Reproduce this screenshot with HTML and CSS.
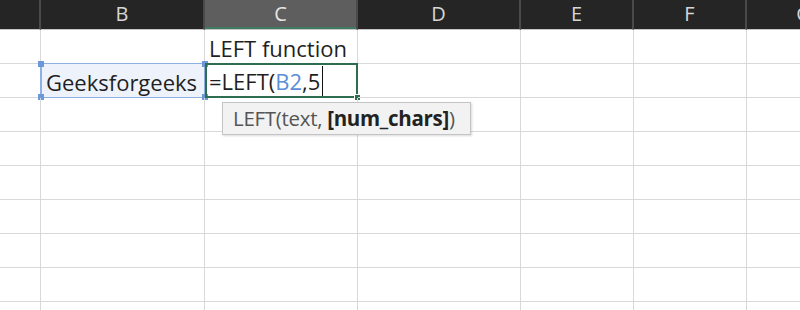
FILE: index.html
```html
<!DOCTYPE html>
<html>
<head>
<meta charset="utf-8">
<link rel="stylesheet" href="styles.css">
</head>
<body>
<div class="sheet">
  <div class="grid">
    <div class="hc"></div>
    <div class="hc">B</div>
    <div class="hc hc-active">C</div>
    <div class="hc">D</div>
    <div class="hc">E</div>
    <div class="hc">F</div>
    <div class="hc hc-last">G</div>

    <div class="c"></div>
    <div class="c"></div>
    <div class="c c-text">LEFT function</div>
    <div class="c"></div><div class="c"></div><div class="c"></div><div class="c"></div>

    <div class="c"></div>
    <div class="c c-text c-ref">Geeksforgeeks
      <span class="h h-tl"></span><span class="h h-tr"></span><span class="h h-bl"></span><span class="h h-br"></span>
    </div>
    <div class="c c-text c-edit">=LEFT(<span class="ref">B2</span>,5<span class="caret"></span>
      <span class="fill"></span>
      <div class="tip">LEFT(text, <b>[num_chars]</b>)</div>
    </div>
    <div class="c"></div><div class="c"></div><div class="c"></div><div class="c"></div>

    <div class="c"></div><div class="c"></div><div class="c"></div><div class="c"></div><div class="c"></div><div class="c"></div><div class="c"></div>
    <div class="c"></div><div class="c"></div><div class="c"></div><div class="c"></div><div class="c"></div><div class="c"></div><div class="c"></div>
    <div class="c"></div><div class="c"></div><div class="c"></div><div class="c"></div><div class="c"></div><div class="c"></div><div class="c"></div>
    <div class="c"></div><div class="c"></div><div class="c"></div><div class="c"></div><div class="c"></div><div class="c"></div><div class="c"></div>
    <div class="c"></div><div class="c"></div><div class="c"></div><div class="c"></div><div class="c"></div><div class="c"></div><div class="c"></div>
    <div class="c"></div><div class="c"></div><div class="c"></div><div class="c"></div><div class="c"></div><div class="c"></div><div class="c"></div>
    <div class="c"></div><div class="c"></div><div class="c"></div><div class="c"></div><div class="c"></div><div class="c"></div><div class="c"></div>
  </div>
</div>
</body>
</html>
```
FILE: styles.css
```css
* { box-sizing: border-box; }
html, body { margin: 0; padding: 0; background: #fff; }
body { width: 800px; height: 310px; overflow: hidden; font-family: "Open Sans", "Noto Sans", sans-serif; }
.sheet { width: 800px; height: 310px; overflow: hidden; }
.grid {
  display: grid;
  width: 860px;
  grid-template-columns: 41px 164px 153px 163px 113px 113px 113px;
  grid-template-rows: 30px;
  grid-auto-rows: 34px;
}
.hc {
  background: #252525;
  color: #d6d6d6;
  font-size: 20px;
  line-height: 28px;
  text-align: center;
  border-right: 2px solid #4a4a4a;
  border-bottom: 1px solid #c6c6c6;
}
.hc-active {
  background: #5e5e5e;
  color: #e6e6e6;
  box-shadow: inset 0 -2px 0 #3f7a62;
}
.hc-last { border-right: none; }
.c {
  position: relative;
  border-right: 1px solid #d9d9d9;
  border-bottom: 1px solid #d9d9d9;
}
.c-text {
  font-size: 22px;
  line-height: 30px;
  color: #1f1f1f;
  display: flex;
  align-items: flex-end;
  padding: 0 0 0 4px;
  white-space: nowrap;
}
.c-ref {
  background: #eef3fb;
  border: 1px solid #8eb0e2;
  border-left: 2px solid #8eb0e2;
  margin-top: -1px;
  margin-left: -1px;
  padding-left: 4px;
}
.h {
  position: absolute;
  width: 6px;
  height: 6px;
  background: #6d98d8;
}
.h-tl { left: -4px; top: -3px; }
.h-tr { right: -4px; top: -3px; }
.h-bl { left: -4px; bottom: -3px; }
.h-br { right: -4px; bottom: -3px; }
.c-edit {
  border: 2px solid #2f6d50;
  margin: -1px 0 0 0;
  padding-left: 2px;
}
.ref { color: #5b8fd6; }
.caret {
  display: inline-block;
  width: 1px;
  height: 30px;
  background: #111;
  margin-left: 2px;
  align-self: flex-end;
}
.fill {
  position: absolute;
  right: -5px;
  bottom: -5px;
  width: 7px;
  height: 7px;
  background: #2f6d50;
  border: 1px solid #fff;
}
.tip {
  position: absolute;
  left: 15px;
  top: 37px;
  width: 249px;
  height: 33px;
  background: #f2f2f2;
  border: 1px solid #c4c4c4;
  box-shadow: 1px 1px 2px rgba(0,0,0,0.15);
  font-size: 20.5px;
  letter-spacing: -0.3px;
  line-height: 30px;
  color: #555;
  padding-left: 10px;
  z-index: 2;
}
.tip b { color: #222; font-weight: 700; }
```
